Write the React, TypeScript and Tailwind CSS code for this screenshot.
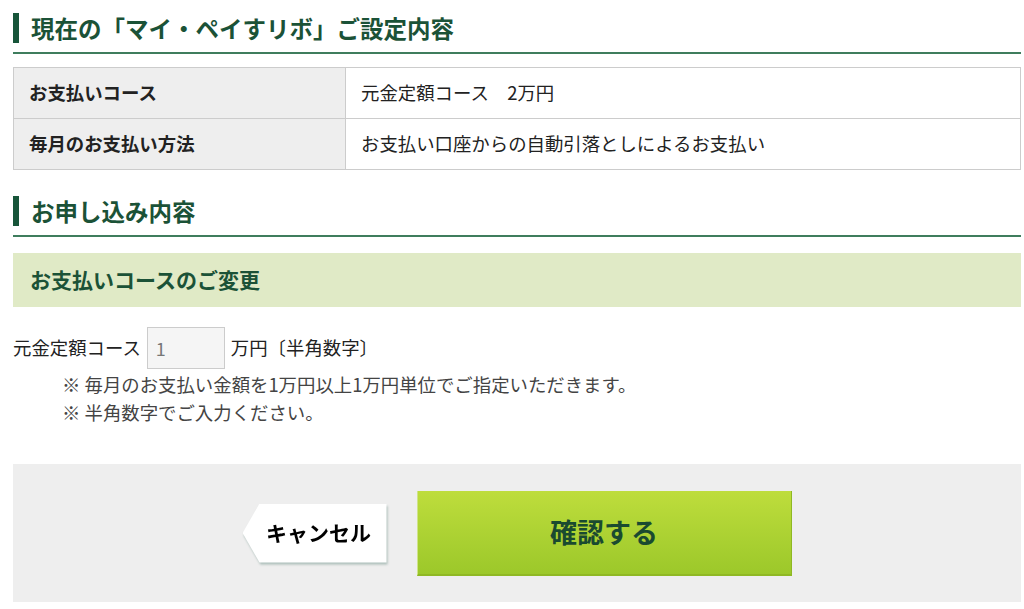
import { useState } from "react";

const font = {
  fontFamily: '"Noto Sans CJK JP", "Noto Sans", sans-serif',
};

function SectionHeading({ title }: { title: string }) {
  return (
    <div className="flex items-center gap-3 border-b-2 border-[#3f7d5d] pb-[9px]">
      <span className="h-[30px] w-[6px] bg-[#17553a]" />
      <h2 className="text-[23.5px] font-bold leading-[30px] text-[#1b5237]">
        {title}
      </h2>
    </div>
  );
}

export default function App() {
  const [amount, setAmount] = useState("1");

  return (
    <div style={font} className="min-h-[609px] bg-white pl-[13px] pr-[3px] pt-[13px] text-[18.4px] text-[#222]">
      <SectionHeading title="現在の「マイ・ペイすリボ」ご設定内容" />

      <table className="mt-[13px] w-full border-collapse border border-[#cccccc]">
        <tbody>
          <tr className="h-[51px]">
            <th className="w-[332px] border border-[#cccccc] bg-[#eeeeee] pl-[15px] text-left font-bold">
              お支払いコース
            </th>
            <td className="border border-[#cccccc] pl-[15px]">
              元金定額コース　2万円
            </td>
          </tr>
          <tr className="h-[51px]">
            <th className="border border-[#cccccc] bg-[#eeeeee] pl-[15px] text-left font-bold">
              毎月のお支払い方法
            </th>
            <td className="border border-[#cccccc] pl-[15px]">
              お支払い口座からの自動引落としによるお支払い
            </td>
          </tr>
        </tbody>
      </table>

      <div className="mt-[26px]">
        <SectionHeading title="お申し込み内容" />
      </div>

      <div className="mt-[16px] flex h-[54px] items-center bg-[#e0eac6] pl-[17px]">
        <h3 className="text-[21px] font-bold text-[#1b5237]">
          お支払いコースのご変更
        </h3>
      </div>

      <div className="mt-[20px] flex items-center">
        <span>元金定額コース</span>
        <input
          value={amount}
          onChange={(e) => setAmount(e.target.value)}
          className="mx-[6px] h-[42px] w-[78px] border border-[#cccccc] bg-[#f5f5f5] px-[8px] text-[18px] text-[#777] outline-none"
        />
        <span>万円〔半角数字〕</span>
      </div>

      <div className="mt-[1px] pl-[49px] leading-[28px] text-[#444]">
        <p>※ 毎月のお支払い金額を1万円以上1万円単位でご指定いただきます。</p>
        <p>※ 半角数字でご入力ください。</p>
      </div>

      <div className="mt-[38px] flex h-[138px] items-center justify-center gap-[30px] bg-[#eeeeee]">
        <div className="drop-shadow-[1px_2px_1px_rgba(90,130,120,0.45)]">
          <button className="flex h-[59px] w-[144px] items-center justify-center bg-white pl-[8px] text-[21px] font-bold text-black [clip-path:polygon(17px_0,100%_0,100%_100%,17px_100%,0_50%)]">
            キャンセル
          </button>
        </div>
        <button className="flex h-[85px] w-[375px] items-center justify-center border-b-2 border-l border-r border-[#8fb823] border-l-[#cfe48a] bg-gradient-to-b from-[#bedd3c] to-[#9cc82a] text-[27px] font-bold text-[#1a4a30]">
          確認する
        </button>
      </div>
    </div>
  );
}
